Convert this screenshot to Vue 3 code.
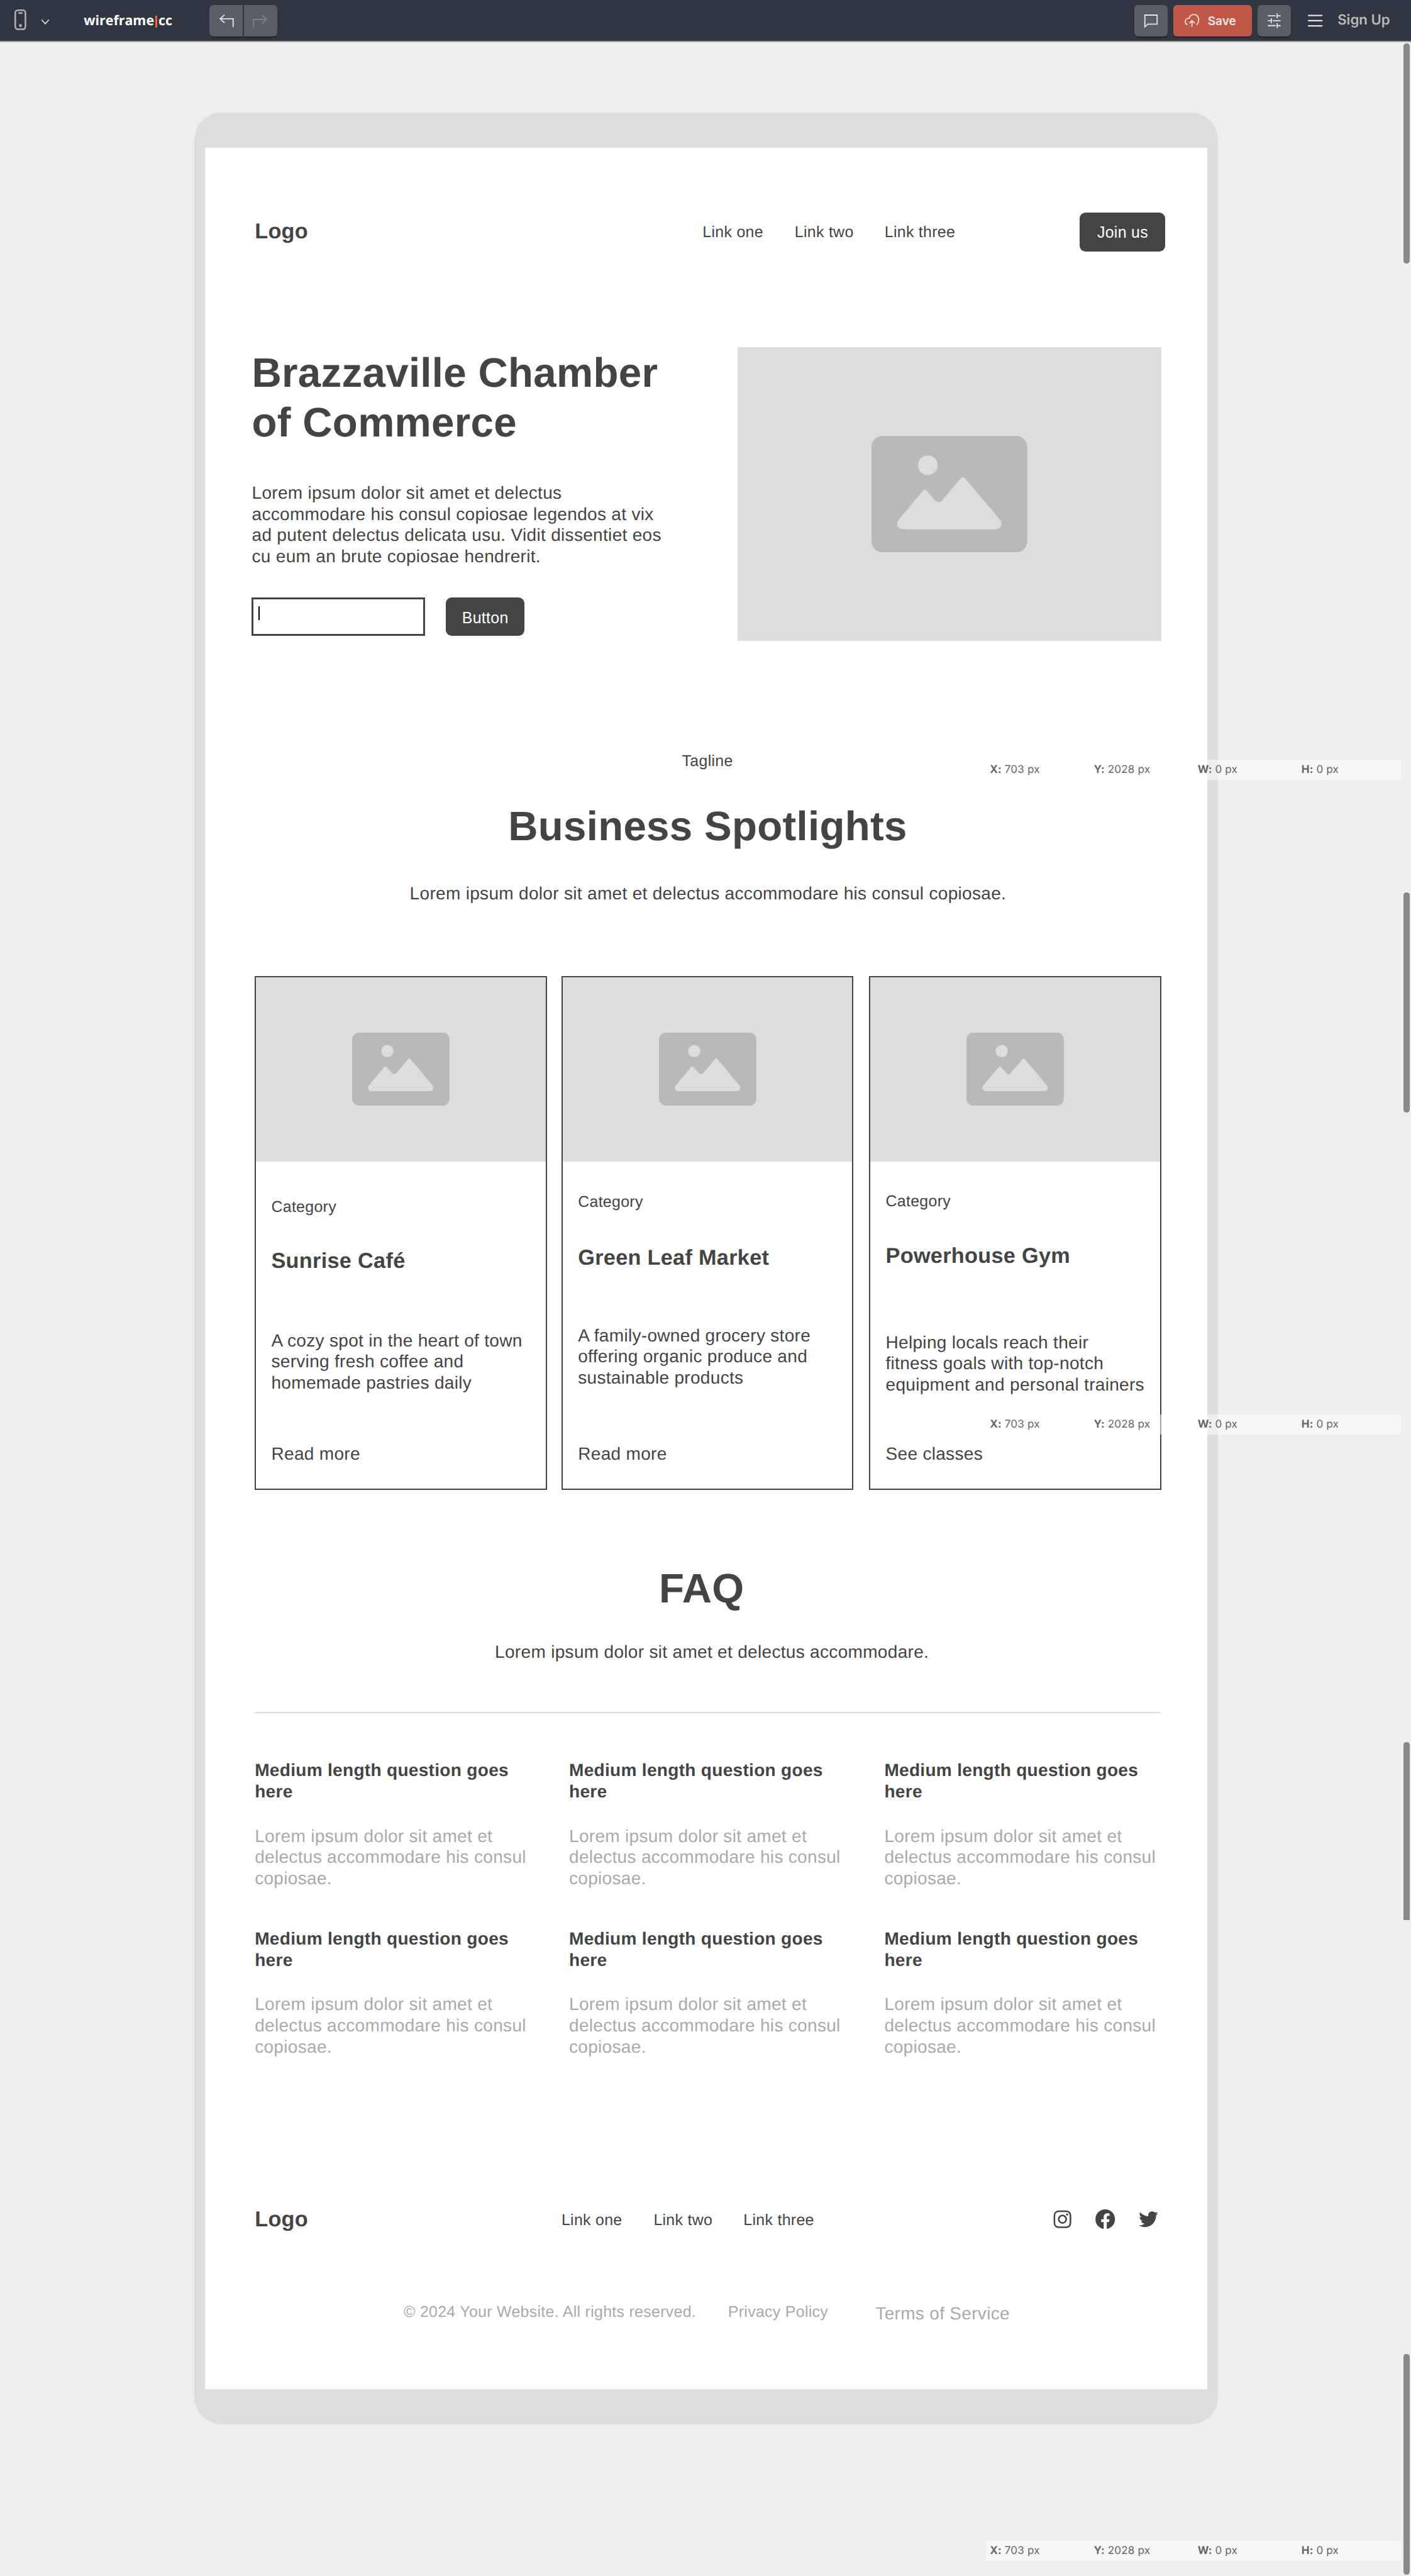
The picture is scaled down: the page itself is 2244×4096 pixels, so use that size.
<script setup>
const cards = [
  { id: 'cafe', title: 'Sunrise Café', lines: ['A cozy spot in the heart of town', 'serving fresh coffee and', 'homemade pastries daily'], link: 'Read more' },
  { id: 'market', title: 'Green Leaf Market', lines: ['A family-owned grocery store', 'offering organic produce and', 'sustainable products'], link: 'Read more' },
  { id: 'gym', title: 'Powerhouse Gym', lines: ['Helping locals reach their', 'fitness goals with top-notch', 'equipment and personal trainers'], link: 'See classes' },
]
const coords = [['X:', '703 px'], ['Y:', '2028 px'], ['W:', '0 px'], ['H:', '0 px']]
const bars = ['one', 'two', 'three']
const thumbs = ['one', 'two', 'three', 'four']
const mountain = 'M55.5 171L104 113.5Q108.6 106 113.5 113.5L131 132.5Q137 138.5 143.5 132.5L181 88Q186.4 80.5 192 88L262.5 171.5C269 180 264 190.5 254 190.5L64 190.5C53 190.5 49 180 55.5 171Z'
</script>

<template>
  <div class="app">
    <header class="topbar">
      <svg class="phone" width="24" height="42" viewBox="0 0 24 42"><rect x="1.6" y="1.6" width="20.8" height="38.8" rx="5" /><path d="M9.3 7.4h6" /><circle cx="12.2" cy="33" r="3" /></svg>
      <svg class="chevron" width="18" height="12" viewBox="0 0 18 12"><path d="M1.5 1.8L9 10l7.500-8.200" /></svg>
      <div class="brand">wireframe<i></i>cc</div>
      <div class="history">
        <button class="tool left"><svg width="68" height="64" viewBox="0 0 68 64"><path d="M31 20L22 28l9 8.500M22 28h26.500v17" /></svg></button>
        <button class="tool right"><svg width="68" height="64" viewBox="0 0 68 64"><path d="M37 20.500L46 29.500l-9 8M46 29.500H19.200V46" /></svg></button>
      </div>
      <div class="actions">
        <button class="tool"><svg width="68" height="64" viewBox="0 0 68 64"><path d="M21.500 20.500h25v18.500h-19l-6 5.500z" /></svg></button>
        <button class="tool save">
          <svg width="30" height="28" viewBox="0 0 30 28"><path d="M5.500 22.500C2.500 21 1.300 18.500 1.300 16c0-3.700 2.800-6.600 6.600-6.800h1.400C10.400 4.500 14.300 1.300 18.800 1.300c5.700 0 9.900 4.600 9.900 10.700 0 4.600-1.700 8.700-4.700 10.500M15 26.500V14M9.700 19l5.300-5.200 5.500 5.200" /></svg>
          <span>Save</span>
        </button>
        <button class="tool"><svg width="68" height="64" viewBox="0 0 68 64"><path d="M21 22h16M40 22h7M40 17v10M21 32h7M28 27v10M31 32h16M21 42h16M40 42h7M40 37v10" /></svg></button>
        <svg class="menu" width="30" height="26" viewBox="0 0 30 26"><path d="M1.500 2h27M1.500 12.700h27M1.500 23.300h27" /></svg>
        <a class="signup">Sign Up</a>
      </div>
    </header>

    <main class="workspace">
      <div class="device">
        <div class="screen">
          <nav class="nav">
            <div class="logo">Logo</div>
            <div class="links"><a>Link one</a><a>Link two</a><a>Link three</a></div>
            <button class="btn join">Join us</button>
          </nav>

          <section class="hero">
            <div class="copy">
              <h1>Brazzaville Chamber<br>of Commerce</h1>
              <p>Lorem ipsum dolor sit amet et delectus<br>accommodare his consul copiosae legendos at vix<br>ad putent delectus delicata usu. Vidit dissentiet eos<br>cu eum an brute copiosae hendrerit.</p>
              <div class="form"><div class="field"><i></i></div><button class="btn submit">Button</button></div>
            </div>
            <div class="picture">
              <svg width="318" height="238" viewBox="0 0 318 238"><rect width="318" height="238" rx="23" fill="#b9b9b9" /><circle cx="115" cy="60" r="20" fill="#ddd" /><path :d="mountain" fill="#ddd" /></svg>
            </div>
          </section>

          <section class="spotlights">
            <div class="tagline">Tagline</div>
            <h2>Business Spotlights</h2>
            <p class="lead">Lorem ipsum dolor sit amet et delectus accommodare his consul copiosae.</p>
            <div class="cards">
              <article v-for="c in cards" :key="c.id" class="card" :class="c.id">
                <div class="picture">
                  <svg width="199" height="149" viewBox="0 0 318 238"><rect width="318" height="238" rx="23" fill="#b9b9b9" /><circle cx="115" cy="60" r="20" fill="#ddd" /><path :d="mountain" fill="#ddd" /></svg>
                </div>
                <div class="body">
                  <div class="category">Category</div>
                  <h3>{{ c.title }}</h3>
                  <p><span v-for="l in c.lines" :key="l">{{ l }}</span></p>
                  <a class="more">{{ c.link }}</a>
                </div>
              </article>
            </div>
          </section>

          <section class="faq">
            <h2>FAQ</h2>
            <p class="lead">Lorem ipsum dolor sit amet et delectus accommodare.</p>
            <hr>
            <div class="questions">
              <div v-for="n in 6" :key="n">
                <h4>Medium length question goes<br>here</h4>
                <p>Lorem ipsum dolor sit amet et<br>delectus accommodare his consul<br>copiosae.</p>
              </div>
            </div>
          </section>

          <footer>
            <div class="foot">
              <div class="logo">Logo</div>
              <div class="links"><a>Link one</a><a>Link two</a><a>Link three</a></div>
              <div class="social">
                <svg width="48" height="48" viewBox="0 0 24 24"><path d="M11.999 7.377a4.623 4.623 0 1 0 0 9.248 4.623 4.623 0 0 0 0-9.248zm0 7.627a3.004 3.004 0 1 1 0-6.008 3.004 3.004 0 0 1 0 6.008z" /><circle cx="16.806" cy="7.207" r="1.078" /><path d="M20.533 6.111A4.605 4.605 0 0 0 17.900 3.479a6.606 6.606 0 0 0-2.186-.42c-.963-.042-1.268-.054-3.710-.054s-2.755 0-3.710.054a6.554 6.554 0 0 0-2.184.42 4.600 4.600 0 0 0-2.633 2.632 6.585 6.585 0 0 0-.419 2.186c-.043.962-.056 1.267-.056 3.710 0 2.442 0 2.753.056 3.710.015.748.156 1.486.419 2.187a4.610 4.610 0 0 0 2.634 2.632 6.584 6.584 0 0 0 2.185.45c.963.042 1.268.055 3.710.055s2.755 0 3.710-.055a6.615 6.615 0 0 0 2.186-.419 4.613 4.613 0 0 0 2.633-2.633c.263-.7.404-1.438.419-2.186.043-.962.056-1.267.056-3.710s0-2.753-.056-3.710a6.581 6.581 0 0 0-.421-2.217zm-1.218 9.532a5.043 5.043 0 0 1-.311 1.688 2.987 2.987 0 0 1-1.712 1.711 4.985 4.985 0 0 1-1.670.311c-.95.044-1.218.055-3.654.055-2.438 0-2.687 0-3.655-.055a4.960 4.960 0 0 1-1.669-.311 2.985 2.985 0 0 1-1.719-1.711 5.080 5.080 0 0 1-.311-1.669c-.043-.95-.053-1.218-.053-3.654 0-2.437 0-2.686.053-3.655a5.038 5.038 0 0 1 .311-1.687c.305-.789.93-1.410 1.719-1.712a5.010 5.010 0 0 1 1.669-.311c.951-.043 1.218-.055 3.655-.055s2.687 0 3.654.055a4.960 4.960 0 0 1 1.670.311 2.991 2.991 0 0 1 1.712 1.712 5.080 5.080 0 0 1 .311 1.669c.043.951.055 1.218.055 3.655 0 2.436 0 2.698-.043 3.654h-.011z" /></svg>
                <svg width="48" height="48" viewBox="0 0 24 24"><path d="M12.001 2.002c-5.522 0-9.999 4.477-9.999 9.999 0 4.990 3.656 9.126 8.437 9.879v-6.988h-2.540v-2.891h2.540V9.798c0-2.508 1.493-3.891 3.776-3.891 1.094 0 2.240.195 2.240.195v2.459h-1.264c-1.240 0-1.628.772-1.628 1.563v1.875h2.771l-.443 2.891h-2.328v6.988C18.344 21.129 22 16.992 22 12.001c0-5.522-4.477-9.999-9.999-9.999z" /></svg>
                <svg width="48" height="48" viewBox="0 0 24 24"><path d="M19.633 7.997c.013.175.013.349.013.523 0 5.325-4.053 11.461-11.460 11.461-2.282 0-4.402-.661-6.186-1.809.324.037.636.05.973.05a8.070 8.070 0 0 0 5.001-1.721 4.036 4.036 0 0 1-3.767-2.793c.249.037.499.062.761.062.361 0 .724-.05 1.061-.137a4.027 4.027 0 0 1-3.230-3.953v-.05c.537.299 1.160.486 1.820.511a4.022 4.022 0 0 1-1.796-3.354c0-.748.199-1.434.548-2.032a11.457 11.457 0 0 0 8.306 4.215c-.062-.3-.1-.611-.1-.923a4.026 4.026 0 0 1 4.028-4.028c1.160 0 2.207.486 2.943 1.272a7.957 7.957 0 0 0 2.556-.973 4.020 4.020 0 0 1-1.771 2.220 8.073 8.073 0 0 0 2.319-.624 8.645 8.645 0 0 1-2.019 2.083z" /></svg>
              </div>
            </div>
            <div class="legal">
              <span class="copyright">© 2024 Your Website. All rights reserved.</span>
              <span class="privacy">Privacy Policy</span>
              <span class="terms">Terms of Service</span>
            </div>
          </footer>
        </div>
      </div>
    </main>

    <div v-for="b in bars" :key="b" class="coords" :class="'at-' + b">
      <span v-for="c in coords" :key="c[0]"><b>{{ c[0] }}</b> {{ c[1] }}</span>
    </div>
    <i v-for="t in thumbs" :key="t" class="thumb" :class="'at-' + t"></i>
  </div>
</template>

<style>
html, body { background: #eee; overflow: hidden; }
</style>

<style scoped>
.app { zoom: 0.779167; position: relative; width: 2880px; height: 5257px; overflow: hidden; background: #eee; color: #444; font-family: "Liberation Sans", Arial, sans-serif; font-size: 36px; line-height: 1.2; letter-spacing: 0.38px; text-rendering: geometricPrecision; }
h1, h2, h3, h4, p { margin: 0; }
svg { display: block; flex: none; }
button { border: 0; padding: 0; margin: 0; font: inherit; letter-spacing: inherit; }

.topbar { box-sizing: border-box; height: 86px; border-bottom: 2.600px solid #9e9e9e; background: #2f3541; display: flex; align-items: flex-start; padding-left: 30px; font-family: Inter, sans-serif; letter-spacing: 0; }
.topbar svg { fill: none; stroke: #e2e4e6; stroke-width: 2.4; }
.topbar .phone { margin-top: 19px; stroke: #b0b3b8; stroke-width: 3.2; stroke-linecap: round; }
.phone circle { fill: #b0b3b8; stroke: none; }
.topbar .chevron { margin: 38px 0 0 29px; stroke: #d5d7da; }
.brand { display: flex; margin-left: 70px; width: 257px; font-family: "Open Sans", sans-serif; font-size: 27.500px; font-weight: 700; line-height: 36px; color: #fff; margin-top: 24px; }
.brand i { width: 4px; height: 25px; margin: 8px 3px 0 2px; background: #ff5c40; }
.history { display: flex; gap: 2px; margin-top: 10px; }
.tool { width: 68px; height: 64px; border-radius: 8px; background: #5b5e67; box-shadow: 0 2px 0 #1b1d20; color: #fff; }
.tool.left { border-radius: 8px 0 0 8px; }
.tool.right { border-radius: 0 8px 8px 0; }
.topbar .tool.right svg { stroke: #80807f; }
.actions { display: flex; gap: 12px; margin: 10px 0 0 auto; }
.save { width: 160px; background: #bf5849; display: flex; align-items: center; padding-left: 23px; box-sizing: border-box; font-size: 24.500px; font-weight: 600; color: #f6e6e4; }
.topbar .save svg { stroke: #f6d9d5; }
.save span { margin-left: 17px; padding-top: 2px; line-height: 30px; }
.topbar .menu { margin: 19px 0 0 23px; stroke-width: 3; stroke-linecap: round; }
.signup { margin: 15px 42px 0 18px; font-size: 28.500px; font-weight: 600; line-height: 34px; color: #b9b9b9; width: 108px; white-space: nowrap; }

.workspace { display: flex; justify-content: flex-start; padding: 144px 0 0 396px; }
.device { box-sizing: border-box; width: 2090px; height: 4718px; padding: 72px 22px; border-radius: 56px; background: #ddd; }
.screen { height: 4574px; background: #fff; display: flow-root; }

.btn { border-radius: 12px; background: #444; color: #fff; font-size: 32px; line-height: 38.4px; }
.logo { font-size: 44px; font-weight: 700; line-height: 52.8px; }
.links { display: flex; font-size: 32px; line-height: 38.4px; }
.links a:nth-child(1) { width: 188px; }
.links a:nth-child(2) { width: 183.500px; }
.nav { display: flex; align-items: center; height: 80px; margin-top: 132px; padding: 0 86px 0 102px; }
.nav .logo { width: 914px; margin-bottom: 2px; }
.nav .links { padding-top: 2px; }
.join { width: 174px; height: 80px; margin-left: auto; padding: 2px 0 0 1px; }

.hero { display: flex; justify-content: space-between; height: 600px; margin-top: 194px; padding: 0 94px 0 96px; }
h1, h2 { font-size: 84px; line-height: 100.8px; font-weight: 700; }
h1 { margin-top: 3.500px; white-space: nowrap; }
.hero p { margin-top: 71.500px; line-height: 43.2px; white-space: nowrap; }
.form { display: flex; gap: 42px; margin: 62.500px 0 0; }
.field { box-sizing: border-box; width: 354px; height: 78px; border: 4px solid #444; padding: 14px 0 0 10px; }
.field i { display: block; width: 2.500px; height: 28px; background: #000; }
.submit { width: 160px; height: 78px; padding: 6px 0 0 1px; }
.picture { display: flex; align-items: center; justify-content: center; background: #ddd; }
.hero .picture { width: 864px; height: 600px; }

.spotlights { margin-top: 227px; }
.tagline { text-align: center; font-size: 32px; line-height: 38px; padding-left: 6px; }
.spotlights h2 { text-align: center; margin-top: 64px; padding-left: 7px; }
.lead { text-align: center; padding-left: 8px; line-height: 43.2px; }
.spotlights .lead { margin-top: 64.500px; }
.cards { display: flex; gap: 30px; margin: 146.500px 0 0 102px; }
.card { box-sizing: border-box; width: 596px; height: 1048px; border: 2.600px solid #444; }
.card.gym { margin-left: 2px; }
.card .picture { height: 375.500px; }
.body { height: 667.300px; padding-left: 31.200px; display: flex; flex-direction: column; white-space: nowrap; }
.category { font-size: 32px; line-height: 38.4px; margin-top: 74.800px; }
h3 { font-size: 44px; line-height: 52.8px; font-weight: 700; margin-top: 65px; }
.body p { margin-top: 113px; }
.body p span { display: block; height: 43.2px; }
.market .category { margin-top: 64.200px; }
.market h3 { margin-top: 68.500px; }
.market p { margin-top: 110px; }
.gym .category { margin-top: 63.700px; }
.gym h3 { margin-top: 65.500px; }
.gym p { margin-top: 127.500px; }
.more { margin-top: auto; margin-bottom: 48px; }

.faq h2 { text-align: center; margin-top: 152px; padding-right: 18px; }
.faq .lead { margin-top: 56.700px; padding-left: 24px; }
hr { border: 0; height: 2px; background: #ddd; margin: 101px 96px 0 102px; }
.questions { display: grid; grid-template-columns: 641.500px 643.500px 1fr; row-gap: 80.500px; margin: 96px 0 0 102px; white-space: nowrap; }
h4 { font-size: 36px; line-height: 43.2px; font-weight: 700; }
.questions p { margin-top: 47.200px; color: #aaa; }

.foot { display: flex; height: 60px; margin-top: 304.800px; padding-left: 102px; }
.foot .logo { width: 626px; }
.foot .links { margin-top: 9.500px; width: 998.500px; }
.foot .social { display: flex; gap: 39.700px; margin-top: 2px; fill: #444; }
.legal { display: flex; margin: 136.500px 0 0 406px; font-size: 32px; line-height: 38.4px; color: #aaa; white-space: nowrap; }
.copyright { width: 662px; }
.privacy { width: 301px; }
.terms { font-size: 36px; line-height: 43.2px; }

.coords { position: absolute; left: 2012px; width: 848px; height: 41px; background: rgba(255, 255, 255, 0.5); display: flex; padding-left: 8.500px; box-sizing: border-box; font-family: Inter, sans-serif; font-size: 22px; line-height: 42px; letter-spacing: 0.15px; color: #666; }
.coords span { flex: 0 0 212px; }
.coords span:last-child { flex-basis: 190px; }
.coords.at-one { top: 1551px; }
.coords.at-two { top: 2887px; }
.coords.at-three { top: 5184.500px; }
.thumb { position: absolute; left: 2865px; width: 12px; height: 450px; border-radius: 6px; background: #888; }
.thumb.at-one { top: 88px; }
.thumb.at-two { top: 1821px; }
.thumb.at-three { top: 3555px; height: 363px; border-radius: 6px 6px 0 0; }
.thumb.at-four { top: 4804px; }
</style>
